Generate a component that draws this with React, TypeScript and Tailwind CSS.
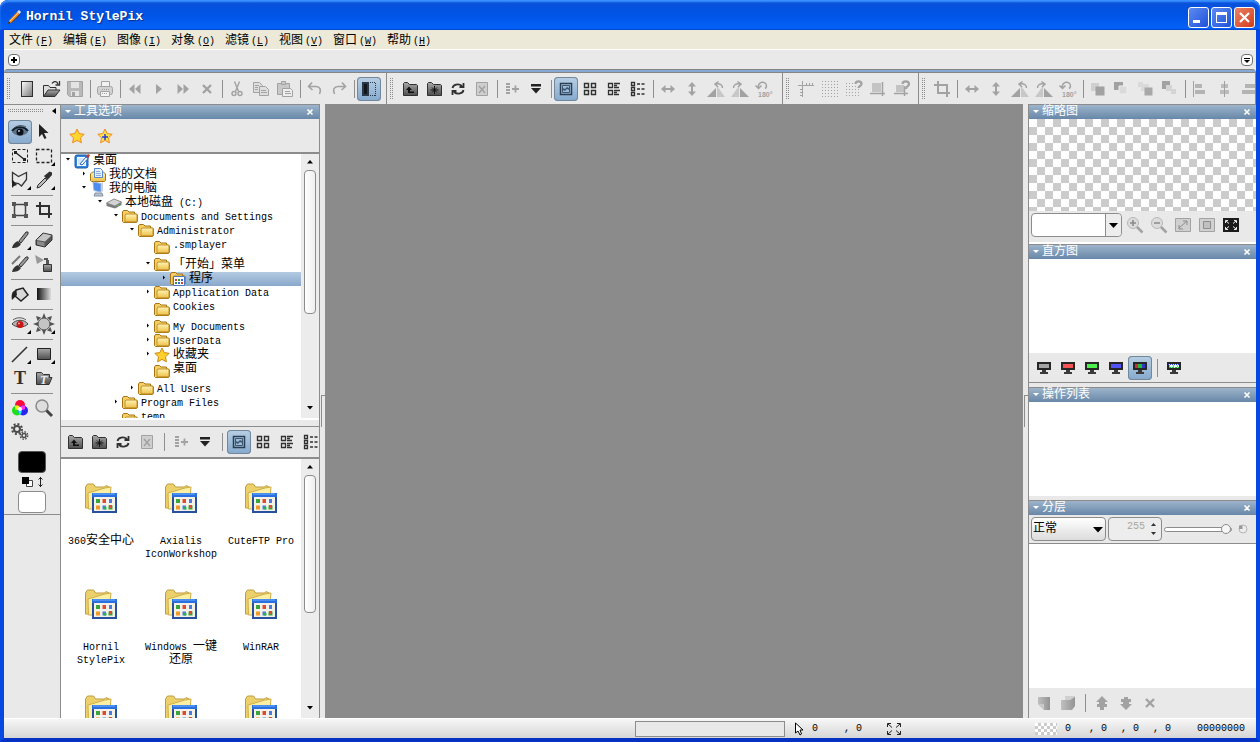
import React from "react";

const dark = "#303030";

const icons: Record<string, React.ReactNode> = {
  new: <rect x="6.5" y="4.5" width="11" height="15" fill="url(#page)" stroke={dark} />,
  open: (
    <>
      <path d="M4.5 19.5V8.5h5l1.5 2h6v3" fill="#ddd" stroke={dark} />
      <path d="M4.5 19.5 9 13h12l-5 6.5z" fill="url(#steel)" stroke={dark} />
      <path d="M13 6.5c2-3 5-2 6 .5M20.5 4v4h-4" fill="none" stroke={dark} strokeWidth="1.3" />
    </>
  ),
  save: (
    <>
      <path d="M4.5 4.5h15v15h-13l-2-2z" fill="#b9b9b9" stroke="currentColor" />
      <path d="M8 5h8v6H8zM8 14h8v5H8z" fill="#e4e4e4" />
      <path d="M9 15h3v4H9z" fill="currentColor" />
    </>
  ),
  print: (
    <>
      <path d="M8.5 10V4.5h8V10" fill="#f2f2f2" stroke="currentColor" />
      <rect x="4.5" y="9.5" width="15" height="8" rx="2" fill="#d2d2d2" stroke="currentColor" />
      <path d="M7.5 14.5h9v5h-9z" fill="#f2f2f2" stroke="currentColor" />
      <path d="M9 12.5h8M9 16.5h6" stroke="currentColor" strokeDasharray="1 1" />
    </>
  ),
  back: <path d="M11.5 7v10L6 12zM17.5 7v10L12 12z" fill="currentColor" />,
  play: <path d="M9 7v10l6-5z" fill="currentColor" />,
  forward: <path d="M6.5 7v10L12 12zM12.5 7v10L18 12z" fill="currentColor" />,
  close: <path d="m8 8 8 8M16 8l-8 8" stroke="currentColor" strokeWidth="2.4" />,
  cut: (
    <g fill="none" stroke="currentColor" strokeWidth="1.4">
      <path d="m9.5 4.5 4 10M14.5 4.5l-4 10" />
      <circle cx="9" cy="16.5" r="2" />
      <circle cx="15" cy="16.5" r="2" />
    </g>
  ),
  copy: (
    <g fill="#dedede" stroke="currentColor">
      <path d="M4.500 5.500h6l3 3v7h-9z" />
      <path d="M10.500 9.500h6l3 3v6h-9z" />
      <path d="M6 8.500h4M6 10.500h3M6 12.500h3M12 13.500h5M12 15.500h6" />
    </g>
  ),
  paste: (
    <g fill="#c8c8c8" stroke="currentColor">
      <path d="M4.5 6.5h12v11h-12z" />
      <path d="M8.5 4.5h4v3h-4z" />
      <path d="M9.5 11.5h8l2 2v6h-10z" fill="#eee" />
      <path d="M12 14.5h5M12 16.5h6" />
    </g>
  ),
  undo: <path d="M9 5.5 5.5 9.5l4 3.5M6 9.5h7c4 0 5.500 3 3.500 7.500" fill="none" stroke="currentColor" strokeWidth="1.6" />,
  redo: <path d="m15 5.5 3.5 4-4 3.5M18 9.5h-7c-4 0-5.500 3-3.500 7.500" fill="none" stroke="currentColor" strokeWidth="1.6" />,
  split: (
    <>
      <path d="M5 5h7v14H5z" fill="#26384a" />
      <path d="M7 7h3v10H7z" fill="#10161c" />
      <path d="M13 5.5h6M18.5 6v13M13 18.5h6" fill="none" stroke="#26384a" strokeDasharray="1 1" />
    </>
  ),
  folderUp: (
    <>
      <path d="M5.5 18.500v-12l1-1h3l2 2h7l1 1v10z" fill="url(#steel)" stroke={dark} />
      <path d="M11 9.500 8 13h2v3h6v-1.500h-4V13h2z" fill="#111" />
    </>
  ),
  folderNew: (
    <>
      <path d="M5.5 18.500v-12l1-1h3l2 2h7l1 1v10z" fill="url(#steel)" stroke={dark} />
      <path d="M12.500 9v8M8.500 13h8M10 10.500l5 5M15 10.500l-5 5" stroke="#111" />
    </>
  ),
  refresh: (
    <g fill="none" stroke={dark} strokeWidth="1.8">
      <path d="M6.500 11c.5-3.500 6-5 9.500-2M17.500 6v4h-4" />
      <path d="M17.500 13c-.5 3.500-6 5-9.500 2M6.500 18v-4h4" />
    </g>
  ),
  remove: (
    <>
      <path d="M6.500 5.500h11v13h-11z" fill="#cfcfcf" stroke="currentColor" />
      <path d="m9 9 6 7M15 9l-6 7" stroke="currentColor" strokeWidth="1.5" />
    </>
  ),
  addList: (
    <>
      <path d="M6 7h4M6 10h4M6 13h4M6 16h4" stroke="currentColor" strokeWidth="2" />
      <path d="M12 12h7M15.500 8.500v7" stroke="currentColor" strokeWidth="1.8" />
    </>
  ),
  drop: <path d="M7 7h10v2.500H7zM7 11h10l-5 5.500z" fill="#222" />,
  viewImage: (
    <>
      <path d="M6.500 6.500h11v11h-11z" fill="none" stroke="#2b3d50" strokeWidth="1.5" />
      <path d="M8.500 8.500h7v7h-7z" fill="#9fbbd6" stroke="#3c5875" />
      <path d="m9 11 2 1 2-2 2 1v2l-2-1-2 2-2-1z" fill="#3c5875" />
    </>
  ),
  viewGrid: <path d="M6.500 6.500h4v4h-4zM13.500 6.500h4v4h-4zM6.500 13.500h4v4h-4zM13.500 13.500h4v4h-4z" fill="none" stroke={dark} strokeWidth="1.4" />,
  viewTiles: (
    <path d="M6.500 6.500h4v4h-4zM6.500 13.500h4v4h-4zM12 6.500h6M12 8.500h3M12 10.500h5M12 13.500h6M12 15.500h3M12 17.500h5" fill="none" stroke={dark} strokeWidth="1.3" />
  ),
  viewList: (
    <path d="M5.500 5.500h3v3h-3zM5.500 10.500h3v3h-3zM5.500 15.500h3v3h-3zM11 7h3M15.500 7h3M11 12h3M15.500 12h3M11 17h3M15.500 17h3" fill="none" stroke={dark} strokeWidth="1.3" />
  ),
  flipH: <path d="m5 12 4.500-4v3h5V8l4.500 4-4.500 4v-3h-5v3z" fill="currentColor" />,
  flipV: <path d="m12 5 4 4.500h-3v5h3L12 19l-4-4.500h3v-5H8z" fill="currentColor" />,
  rotL: (
    <>
      <path d="m3 20 9-9v9z" fill="currentColor" />
      <path d="m13 9 8 11h-8z" fill="#c8c8c8" />
      <path d="M14.500 4.500 11 7l3 3M11.500 7c4-.5 7 0 7 4" fill="none" stroke="currentColor" strokeWidth="1.5" />
    </>
  ),
  rotR: (
    <>
      <path d="m21 20-9-9v9z" fill="currentColor" />
      <path d="m11 9-8 11h8z" fill="#c8c8c8" />
      <path d="M9.500 4.500 13 7l-3 3M12.500 7c-4-.5-7 0-7 4" fill="none" stroke="currentColor" strokeWidth="1.5" />
    </>
  ),
  rot180: (
    <>
      <path d="m3.500 8.500 3 3 3-3M6.500 11c-1.500-7 8-7.500 8-2 0 1-.5 2-1.500 2.500" fill="none" stroke="currentColor" strokeWidth="1.5" />
      <text x="6" y="20" fontSize="7" fontWeight="700" fontFamily="Liberation Sans" fill="currentColor">180°</text>
    </>
  ),
  ruler: <path d="M4 8.500h16M8.500 4v16M12.500 6v3M15.500 6v3M18.500 6v3M6 12.500h3M6 15.500h3M6 18.500h3" stroke="currentColor" fill="none" />,
  dots: <path d="M4 4.500h17M4 7.500h17M4 10.500h17M4 13.500h17M4 16.500h17M4 19.500h17" stroke="currentColor" strokeDasharray="1 2" />,
  dotsSnap: (
    <>
      <path d="M4 6.500h9M4 9.500h11M4 12.500h14M4 15.500h14M4 18.500h14" stroke="currentColor" strokeDasharray="1 2" />
      <path d="M13.500 7c0-3.500 6-3.500 6 0 0 2-3 2-3 4" fill="none" stroke="currentColor" strokeWidth="2.2" />
    </>
  ),
  guide: (
    <>
      <path d="M6 6h9v9H6z" fill="#c4c4c4" />
      <path d="M4 16.500h15M16.500 5v14" stroke="currentColor" strokeWidth="1.5" />
    </>
  ),
  guideSnap: (
    <>
      <path d="M6 8h8v7H6z" fill="#c4c4c4" />
      <path d="M4 16.500h14M14.500 9v10" stroke="currentColor" strokeWidth="1.5" />
      <path d="M12.500 7c0-3.500 6.500-3.500 6.500 0 0 2.500-3 2-3 5" fill="none" stroke="currentColor" strokeWidth="2.2" />
    </>
  ),
  crop: <path d="M4 8h13v12M8 4v12h12" fill="none" stroke="currentColor" strokeWidth="2" />,
  front: (
    <>
      <path d="M5 6h8v8H5z" fill="#cfcfcf" />
      <path d="M9.500 9.500h9v9h-9z" fill="currentColor" />
    </>
  ),
  backward: (
    <>
      <path d="M4 5h9v8H4z" fill="currentColor" />
      <path d="M9 9h8v8H9z" fill="#dadada" stroke="#eee" />
    </>
  ),
  raise: (
    <>
      <path d="M4 5h5v5H4zM7 7h8v7H7z" fill="#dadada" />
      <path d="M10.500 10.500h8v8h-8z" fill="#a8a8a8" />
    </>
  ),
  lower: (
    <>
      <path d="M4 4h8v5H8v3H4z" fill="currentColor" />
      <path d="M8 8h6v6H8zM13 12h5v5h-5z" fill="#d4d4d4" />
    </>
  ),
  alignL: (
    <>
      <path d="M5.500 4v16" stroke="currentColor" />
      <path d="M7 7h7v4H7zM7 13h10v4H7z" fill="#b4b4b4" />
    </>
  ),
  alignC: (
    <>
      <path d="M9 7h7v4H9zM8 13h9v4H8z" fill="#bcbcbc" />
      <path d="M12.500 4v16" stroke="currentColor" />
    </>
  ),
  alignR: <path d="M9 7h10v4H9zM6 13h13v4H6z" fill="#b4b4b4" />,
  eye: (
    <>
      <path d="M4 12c4-5 12-5 16 0-4 5-12 5-16 0z" fill="#5f7387" />
      <path d="M4 11c4-5 12-5 16 0" fill="none" stroke="#111d29" strokeWidth="1.8" />
      <path d="M6 8c4-3 8-3 12-1" fill="none" stroke="#3c4f61" />
      <circle cx="12" cy="12" r="3.5" fill="#0c1218" />
      <circle cx="11" cy="11" r="1" fill="#b9cbdc" />
    </>
  ),
  pointer: <path d="M7 4v13l3-3 2.500 5 2-1-2.500-5h4.500z" fill="#222" />,
  transformSel: (
    <g fill="none" stroke="#222">
      <path d="M4.500 5.500h15v13h-15z" strokeDasharray="3 2" />
      <path d="m7 8 10 8" strokeWidth="1.5" />
      <path d="M6 7h3v3H6zM15 14h3v3h-3z" fill="#222" stroke="none" />
    </g>
  ),
  rectSel: <path d="M4.500 5.500h15v13h-15z" fill="none" stroke="#222" strokeWidth="1.3" strokeDasharray="3 2" />,
  lasso: (
    <>
      <path d="M4.500 14.500v-10l6 4 8-4v7l-5 6.500-3-2.500-6-1z" fill="none" stroke="#333" strokeWidth="1.3" />
      <path d="M4 11v9l2-2 3-1z" fill="#222" />
    </>
  ),
  dropper: (
    <>
      <path d="m5 20 1-3 7-7 2 2-7 7z" fill="#bbb" stroke={dark} />
      <path d="m12 8 5.500-4.500 2.500 1v2.500L15.500 12z" fill={dark} />
    </>
  ),
  frame: (
    <>
      <path d="M6.500 6.500h11v11h-11z" fill="none" stroke="#444" strokeWidth="1.5" />
      <path d="M4 4h4v4H4zM16 4h4v4h-4zM4 16h4v4H4zM16 16h4v4h-4z" fill="#555" />
    </>
  ),
  brush: (
    <>
      <path d="m11 13 7-9h2v2l-7 9z" fill="#999" stroke={dark} />
      <path d="M4 20c1-4 3-6 6-7l3 3c-2 3-4 4-9 4z" fill="#333" />
    </>
  ),
  cloneBrush: (
    <>
      <path d="M4 12 12 4" stroke="#777" strokeWidth="2" />
      <path d="m11 13 7-8h2v2l-7 8z" fill="#999" stroke={dark} />
      <path d="M4 20c1-4 3-6 6-7l3 3c-2 3-5 4-9 4z" fill="#333" />
    </>
  ),
  eraser: (
    <>
      <path d="m4 12 7-7 9 2v5l-7 7-9-2z" fill="#555" stroke="#333" />
      <path d="m4.500 12 7-6.500 8 2-6.500 6z" fill="#c4c4c4" />
      <path d="m5 13 7.500 1.500v4L5 16.500z" fill="#8a8a8a" />
    </>
  ),
  spray: (
    <>
      <path d="m3 3 9 5-7 4z" fill="#999" />
      <path d="M11.500 12.500h8v7h-8z" fill="url(#steel)" stroke="#333" />
      <path d="M14 8h3v4h-3zM12 6h4v2h-4z" fill="#555" />
    </>
  ),
  bucket: (
    <>
      <path d="m8 8 7-2 5 7-7 6-6-5z" fill="#d8d8d8" stroke="#222" strokeWidth="1.5" />
      <path d="M4 18c-1-5 0-9 4-10l1 5z" fill="#222" />
    </>
  ),
  gradient: <path d="M5 6h14v12H5z" fill="url(#fade)" />,
  redEye: (
    <>
      <path d="M4 12c4-5 12-5 16 0-4 4-12 4-16 0z" fill="#b5b5b5" stroke="#444" />
      <path d="M5 8c4-3 9-3 13 0" fill="none" stroke="#555" />
      <circle cx="12" cy="12.5" r="3.5" fill="#c81414" />
      <circle cx="11" cy="11.5" r="1" fill="#f6a0a0" />
    </>
  ),
  sun: (
    <>
      <path d="m12 1 2 5h-4zM12 23l2-5h-4zM1 12l5-2v4zM23 12l-5-2v4zM4 4l5 1.500L5.500 9zM20 4l-5 1.500L18.500 9zM4 20l5-1.500L5.500 15zM20 20l-5-1.500 3.500-3.500z" fill="#555" />
      <circle cx="12" cy="12" r="6" fill="#c4c4c4" stroke="#4a4a4a" />
    </>
  ),
  line: <path d="M4 20 19 5" stroke="#333" strokeWidth="1.6" />,
  shape: <path d="M5.500 6.500h13v11h-13z" fill="url(#steel)" stroke="#222" />,
  text: (
    <text x="6" y="18" fontSize="18" fontWeight="700" fontFamily="Liberation Serif" fill={dark}>
      T
    </text>
  ),
  textFolder: (
    <>
      <path d="M4.500 18.500v-12h5l2 2h6v3h2.500l-3 7z" fill="url(#steel)" stroke={dark} />
      <text x="8" y="18" fontSize="12" fontWeight="700" fontStyle="italic" fontFamily="Liberation Serif" fill="#eee">
        T
      </text>
    </>
  ),
  colors: (
    <>
      <circle cx="12" cy="9" r="5" fill="#ff0a3c" />
      <circle cx="9" cy="14.5" r="5" fill="#1de019" />
      <circle cx="15" cy="14.5" r="5" fill="#2824f0" />
      <path d="M7 9.700c2-.7 4 0 5 1.500l-1 3-4-1z" fill="#ffee16" />
      <path d="M17 9.700c-2-.7-4 0-5 1.500l1 3 4-1z" fill="#ff30f0" />
      <path d="M12 19c-2-2-2-4-1-6h2c1 2 1 4-1 6z" fill="#20e8f0" />
      <circle cx="12" cy="13" r="2" fill="#fff" />
    </>
  ),
  magnifier: (
    <>
      <circle cx="10" cy="10" r="6" fill="#dedede" stroke="#8a8a8a" strokeWidth="1.5" />
      <path d="m14.500 14.500 5.500 5.500" stroke="#444" strokeWidth="3" />
    </>
  ),
  gears: (
    <g fill="none" stroke="#4b4b4b">
      <circle cx="9" cy="9" r="3" strokeWidth="2" />
      <circle cx="9" cy="9" r="5" strokeWidth="2" strokeDasharray="2 1.9" />
      <circle cx="16" cy="15.5" r="2" strokeWidth="1.5" />
      <circle cx="16" cy="15.5" r="3.7" strokeWidth="1.5" strokeDasharray="1.5 1.4" />
    </g>
  ),
  zoomIn: (
    <>
      <path d="m13.500 13.500 6 6" stroke="currentColor" strokeWidth="2.5" />
      <circle cx="10" cy="10" r="5.5" fill="#dcdcdc" stroke="#b8b8b8" />
      <path d="M7 10h6M10 7v6" stroke="#8a8a8a" strokeWidth="1.6" />
    </>
  ),
  zoomOut: (
    <>
      <path d="m13.500 13.500 6 6" stroke="currentColor" strokeWidth="2.5" />
      <circle cx="10" cy="10" r="5.5" fill="#dcdcdc" stroke="#b8b8b8" />
      <path d="M7 10h6" stroke="#8a8a8a" strokeWidth="1.6" />
    </>
  ),
  fit: (
    <>
      <path d="M4.500 5.500h15v13h-15z" fill="#d0d0d0" stroke="currentColor" />
      <path d="m8 15 8-7M12 8h4v4M12 16H8v-4" fill="none" stroke="#8d8d8d" />
    </>
  ),
  actual: (
    <>
      <path d="M4.500 5.500h15v13h-15z" fill="#d0d0d0" stroke="currentColor" />
      <path d="M8.500 8.500h7v7h-7z" fill="#c0c0c0" stroke="#8d8d8d" />
    </>
  ),
  full: (
    <>
      <path d="M4 5h16v14H4z" fill="#1c1c1c" />
      <path d="M6.500 10V7.500H9M7 8l3 2.500M17.500 10V7.500H15M17 8l-3 2.500M6.500 14v2.500H9M7 16l3-2.500M17.500 14v2.500H15M17 16l-3-2.500" fill="none" stroke="#eee" />
    </>
  ),
  layerNew: (
    <>
      <path d="M6 6h12v13h-6l-6-6z" fill="url(#faint)" />
      <path d="M6 13h6v6z" fill="#c9c9c9" />
    </>
  ),
  layerCopy: (
    <>
      <path d="M9 5h10v10H9z" fill="#d0d0d0" />
      <path d="M5 9h9l5-3v9l-3 4H5z" fill="url(#faint)" />
    </>
  ),
  up: <path d="m12 5 6 6h-3v2h2v3h-3v3h-4v-3H7v-3h2v-2H6z" fill="currentColor" />,
  down: <path d="m12 19 6-6h-3v-2h2V8h-3V6h-4v2H7v3h2v2H6z" fill="currentColor" />,
};

const screens: Record<string, React.ReactNode> = {
  gray: <path d="M7 8h10v4H7z" fill="#a5a5a5" />,
  red: <path d="M7 8h10v4H7z" fill="#f45454" />,
  green: <path d="M7 8h10v4H7z" fill="#4df04d" />,
  blue: <path d="M7 8h10v4H7z" fill="#5454f4" />,
  rgb: (
    <>
      <path d="M7 8h4v4H7z" fill="#c42c3c" />
      <path d="M10 8h4v4h-4z" fill="#25b93b" />
      <path d="M14 8h3v4h-3z" fill="#3036c8" />
    </>
  ),
  noise: (
    <>
      <path d="M7 8h10v4H7z" fill="#e5fff0" />
      <path d="M6 8.500h12" stroke="#2236ef" strokeDasharray="1 1" />
      <path d="M7 11.500h10" stroke="#1cc43a" strokeDasharray="2 1" />
      <path d="M7 10h10" stroke="#d02828" strokeDasharray="1 3" />
    </>
  ),
};

Object.entries(screens).forEach(([name, fill]) => {
  icons[`screen-${name}`] = (
    <>
      <path d="M5 6h14v8H5z" fill="#262626" />
      <path d="M10 14h4v2h2v2H8v-2h2z" fill="#3a3a3a" />
      {fill}
    </>
  );
});

const Defs: React.FC = () => (
  <svg className="block size-0" aria-hidden="true">
    <defs>
      <linearGradient id="page" x1="0" y1="0" x2="1" y2="1">
        <stop offset="0" stopColor="#fff" />
        <stop offset="1" stopColor="#777" />
      </linearGradient>
      <linearGradient id="steel" x1="0" y1="0" x2="0" y2="1">
        <stop offset="0" stopColor="#a8a8a8" />
        <stop offset="1" stopColor="#4e4e4e" />
      </linearGradient>
      <linearGradient id="fade">
        <stop offset="0" stopColor="#111" />
        <stop offset="1" stopColor="#ddd" />
      </linearGradient>
      <linearGradient id="faint">
        <stop offset="0" stopColor="#c0c0c0" />
        <stop offset="1" stopColor="#939393" />
      </linearGradient>
      <linearGradient id="gold" x1="0" y1="0" x2="0" y2="1">
        <stop offset="0" stopColor="#fff5b4" />
        <stop offset="1" stopColor="#eec04a" />
      </linearGradient>
    </defs>
  </svg>
);

// Latin runs sit on a 6px half-width grid next to 12px CJK glyphs.
const Txt: React.FC<{ children: string }> = ({ children }) => (
  <>
    {children.split(/([\x20-\x7e]+)/).map((run, i) =>
      i % 2 ? (
        <span key={i} className="text-[10px]">
          {run}
        </span>
      ) : (
        run
      )
    )}
  </>
);

type ToolProps = { icon: string; label: string; off?: boolean; active?: boolean; more?: boolean };

const Tool: React.FC<ToolProps> = ({ icon, label, off, active, more }) => (
  <button
    type="button"
    aria-label={label}
    aria-pressed={active}
    className={
      active
        ? "size-6 shrink-0 rounded-[4px] bg-linear-to-b from-[#b9cfe4] to-[#85a9cd] ring-1 ring-inset ring-[#71879c]"
        : "size-6 shrink-0"
    }
  >
    <svg viewBox="0 0 24 24" className={off ? "size-6 text-[#a2a2a2]" : "size-6 text-[#303030]"}>
      {icons[icon]}
      {more && <path d="M23 18v4h-4z" fill="#000" />}
    </svg>
  </button>
);

const Sep: React.FC<{ wide?: boolean }> = ({ wide }) => (
  <span className={wide ? "flex w-2.5 shrink-0 justify-center" : "flex w-1.5 shrink-0 justify-center"}>
    <span className="h-[18px] w-px bg-[#8f8f8f]" />
  </span>
);

const Grip: React.FC = () => (
  <span className="mr-1 ml-[3px] h-[22px] w-1 shrink-0 bg-[conic-gradient(at_1px_1px,transparent_75%,#8c8c8c_0)] bg-[length:2px_2px]" />
);

const BrowseTools: React.FC<{ wide?: boolean }> = ({ wide }) => (
  <>
    <Tool icon="folderUp" label="向上" />
    <Tool icon="folderNew" label="新建文件夹" />
    <Tool icon="refresh" label="刷新" />
    <Tool icon="remove" label="删除" off />
    <Sep wide={wide} />
    <Tool icon="addList" label="添加到列表" off />
    <Tool icon="drop" label="更多" />
    <Sep wide={wide} />
    <Tool icon="viewImage" label="缩略图" active />
    <Tool icon="viewGrid" label="图标" />
    <Tool icon="viewTiles" label="平铺" />
    <Tool icon="viewList" label="列表" />
  </>
);

const TransformTools: React.FC = () => (
  <>
    <Tool icon="flipH" label="水平翻转" off />
    <Tool icon="flipV" label="垂直翻转" off />
    <Tool icon="rotL" label="向左旋转" off />
    <Tool icon="rotR" label="向右旋转" off />
    <Tool icon="rot180" label="旋转180°" off />
  </>
);

const PanelHeader: React.FC<{ title: string }> = ({ title }) => (
  <div className="flex h-[15px] shrink-0 items-center border-t border-[#8c8c8c] bg-linear-to-b from-[#9db4cb] to-[#6887a8] pr-[5px] pl-1 text-white">
    <svg viewBox="0 0 6 4" className="h-1 w-1.5">
      <path d="M0 0h6L3 3z" fill="#fff" />
    </svg>
    <h2 className="ml-[3px] leading-[14px]">{title}</h2>
    <button type="button" aria-label={`关闭${title}`} className="ml-auto">
      <svg viewBox="0 0 8 8" className="size-2">
        <path d="m1.500 1.500 5 5M6.500 1.500l-5 5" stroke="#fff" strokeWidth="1.6" />
      </svg>
    </button>
  </div>
);

const TitleBar: React.FC = () => (
  <header className="flex h-[30px] shrink-0 items-center rounded-t-lg bg-linear-to-b from-[#0a4fd8] via-[#0054e6] to-[#0563fb] pt-1 pr-[5px] pl-1.5 text-white shadow-[inset_0_2px_2px_#3d93ff,inset_0_-1px_1px_#0046d0]">
    <Defs />
    <svg viewBox="0 0 16 16" className="size-4">
      <path d="M2 15 3.500 11 11 3l2.500 2L6 13z" fill="#f08a24" />
      <path d="m4 12 8-8" stroke="#ffd27a" />
      <path d="m6 13.500 8-8.500" stroke="#7a3a08" />
      <path d="m11 3 2-2 2 2-1.500 2z" fill="#e8e2da" />
      <path d="m2 15 .8-2.500L4.500 14z" fill="#222" />
    </svg>
    <h1 className="ml-1 text-[13px] font-bold text-shadow-[1px_1px_1px_#0a2f8a]">Hornil StylePix</h1>
    <div className="ml-auto flex gap-0.5">
      <button type="button" aria-label="最小化" className="size-[21px] rounded-[3px] border border-white bg-linear-to-br from-[#5d8af2] to-[#1f50d8]">
        <svg viewBox="0 0 19 19"><path d="M4 12h7v3H4z" fill="#fff" /></svg>
      </button>
      <button type="button" aria-label="最大化" className="size-[21px] rounded-[3px] border border-white bg-linear-to-br from-[#5d8af2] to-[#1f50d8]">
        <svg viewBox="0 0 19 19"><path d="M4 4h11v11H4zM5 7v7h9V7z" fill="#fff" fillRule="evenodd" /></svg>
      </button>
      <button type="button" aria-label="关闭" className="size-[21px] rounded-[3px] border border-white bg-linear-to-br from-[#ea8062] to-[#d23a14]">
        <svg viewBox="0 0 19 19"><path d="m5 5 9 9M14 5l-9 9" stroke="#fff" strokeWidth="2.2" /></svg>
      </button>
    </div>
  </header>
);

const menus = [
  ["文件", "F"],
  ["编辑", "E"],
  ["图像", "I"],
  ["对象", "O"],
  ["滤镜", "L"],
  ["视图", "V"],
  ["窗口", "W"],
  ["帮助", "H"],
];

const MenuBar: React.FC = () => (
  <nav className="flex h-5 shrink-0 items-center border-b border-white bg-[#ece9d8] pt-0.5">
    {menus.map(([name, key]) => (
      <button key={key} type="button" className="w-[54px] shrink-0 pl-[5px] text-left whitespace-nowrap">
        {name}
        <span className="ml-0.5 text-[10px]">
          (<u>{key}</u>)
        </span>
      </button>
    ))}
  </nav>
);

const TabStrip: React.FC = () => (
  <div className="shrink-0">
    <div className="flex h-[19px] items-center justify-between pr-[3px] pl-1">
      <button type="button" aria-label="新建标签" className="size-3 rounded-[4px] border border-[#707070] bg-white">
        <svg viewBox="0 0 10 10"><path d="M2 5h6M5 2v6" stroke="#000" strokeWidth="2" /></svg>
      </button>
      <button type="button" aria-label="标签列表" className="size-3 rounded-[4px] border border-[#707070] bg-white">
        <svg viewBox="0 0 10 10"><path d="M2 3.500h6" stroke="#000" /><path d="M2 5h6L5 8z" /></svg>
      </button>
    </div>
    <div className="h-1 rounded-t-sm border-y border-[#858585] bg-[#86a8d4]" />
  </div>
);

const ToolBar: React.FC = () => (
  <div className="flex h-[31px] shrink-0 overflow-hidden border-r border-[#8c8c8c]">
    <div className="flex shrink-0 items-center border-r border-[#8c8c8c] pr-[5px]">
      <Grip />
      <Tool icon="new" label="新建" />
      <Tool icon="open" label="打开" />
      <Tool icon="save" label="保存" off />
      <Sep />
      <Tool icon="print" label="打印" off />
      <Sep />
      <Tool icon="back" label="上一个" off />
      <Tool icon="play" label="播放" off />
      <Tool icon="forward" label="下一个" off />
      <Tool icon="close" label="关闭" off />
      <Sep />
      <Tool icon="cut" label="剪切" off />
      <Tool icon="copy" label="复制" off />
      <Tool icon="paste" label="粘贴" off />
      <Sep />
      <Tool icon="undo" label="撤销" off />
      <Tool icon="redo" label="重做" off />
      <Sep />
      <Tool icon="split" label="浏览面板" active />
    </div>
    <div className="flex shrink-0 items-center border-r border-[#8c8c8c] pr-1.5">
      <Grip />
      <BrowseTools />
      <Sep />
      <TransformTools />
    </div>
    <div className="flex shrink-0 items-center border-r border-[#8c8c8c] pr-1">
      <Grip />
      <Tool icon="ruler" label="标尺" off />
      <Tool icon="dots" label="网格" off />
      <Tool icon="dotsSnap" label="对齐网格" off />
      <Tool icon="guide" label="参考线" off />
      <Tool icon="guideSnap" label="对齐参考线" off />
    </div>
    <div className="flex min-w-0 flex-1 items-center overflow-hidden">
      <Grip />
      <Tool icon="crop" label="裁剪" off />
      <Sep />
      <TransformTools />
      <Sep />
      <Tool icon="front" label="置于顶层" off />
      <Tool icon="backward" label="置于底层" off />
      <Tool icon="raise" label="上移" off />
      <Tool icon="lower" label="下移" off />
      <Sep />
      <Tool icon="alignL" label="左对齐" off />
      <Tool icon="alignC" label="居中对齐" off />
      <Tool icon="alignR" label="右对齐" off />
    </div>
  </div>
);

const toolGroups: ToolProps[][] = [
  [
    { icon: "eye", label: "浏览", active: true },
    { icon: "pointer", label: "选择对象" },
    { icon: "transformSel", label: "变换选区" },
    { icon: "rectSel", label: "矩形选区", more: true },
    { icon: "lasso", label: "套索", more: true },
    { icon: "dropper", label: "魔棒", more: true },
  ],
  [
    { icon: "frame", label: "变形" },
    { icon: "crop", label: "裁剪" },
  ],
  [
    { icon: "brush", label: "画笔", more: true },
    { icon: "eraser", label: "橡皮擦" },
    { icon: "cloneBrush", label: "仿制" },
    { icon: "spray", label: "喷枪" },
  ],
  [
    { icon: "bucket", label: "填充" },
    { icon: "gradient", label: "渐变" },
  ],
  [
    { icon: "redEye", label: "去红眼", more: true },
    { icon: "sun", label: "曝光", more: true },
  ],
  [
    { icon: "line", label: "直线", more: true },
    { icon: "shape", label: "形状", more: true },
    { icon: "text", label: "文字" },
    { icon: "textFolder", label: "插入图片" },
  ],
  [
    { icon: "colors", label: "颜色" },
    { icon: "magnifier", label: "缩放" },
    { icon: "gears", label: "设置" },
  ],
];

const ToolBox: React.FC = () => (
  <aside className="w-14 shrink-0 border-t border-[#8c8c8c]">
    <div className="flex flex-col border-b border-[#8c8c8c] pb-px">
      <div className="flex h-[15px] items-start justify-between pt-[3px] pr-1 pl-1">
        <span className="mt-px h-1 w-9 bg-[conic-gradient(at_1px_1px,transparent_75%,#8c8c8c_0)] bg-[length:2px_2px]" />
        <svg viewBox="0 0 4 6" className="h-1.5 w-1">
          <path d="M4 0v6L0 3z" fill="#000" />
        </svg>
      </div>
      {toolGroups.map((group, i) => (
        <div key={i}>
          {i > 0 && (
            <div className="flex h-1.5 items-center px-[7px]">
              <span className="h-px flex-1 bg-[#8f8f8f]" />
            </div>
          )}
          <div className="flex flex-wrap px-1">
            {group.map((tool) => (
              <Tool key={tool.icon} {...tool} />
            ))}
          </div>
        </div>
      ))}
      <div className="mt-[7px] flex flex-col items-center gap-[3px]">
        <button type="button" aria-label="前景色" className="h-[22px] w-7 rounded-[4px] border border-[#555] bg-black" />
        <svg viewBox="0 0 24 12" className="h-3 w-6">
          <path d="M6.500 4.500h6v6h-6z" fill="#fff" stroke="#444" />
          <path d="M2 1h7v7H2z" fill="#000" />
          <path d="M20.500 1v10M18.500 3.500l2-2 2 2M18.500 8.500l2 2 2-2" fill="none" stroke="#222" />
        </svg>
        <button type="button" aria-label="背景色" className="h-[22px] w-7 rounded-[4px] border border-[#8c8c8c] bg-white" />
      </div>
    </div>
  </aside>
);

const folderPath = (
  <>
    <path d="M.5 12.500V3l1-1.500h4L7 3h5.500v2h2l1 1v6.500l-1 1h-13z" fill="#f3cf66" stroke="#a87410" />
    <path d="M3 12.500V6l1-1h10.500l.5 1v6l-1 .8H3z" fill="url(#gold)" stroke="#c0902a" />
  </>
);

const starPath = "m8 1 2.200 4.600 5 .7-3.700 3.500.9 5L8 12.400l-4.400 2.400.9-5L.8 6.300l5-.7z";

const treeIcons: Record<string, React.ReactNode> = {
  folder: folderPath,
  programs: (
    <>
      {folderPath}
      <path d="M3.500 5.500h11v9h-11z" fill="#fff" stroke="#4d77b8" />
      <path d="M5 8h2v2H5zM11 11h2v2h-2z" fill="#d63b2a" />
      <path d="M8 8h2v2H8zM5 11h2v2H5z" fill="#2f9a3a" />
      <path d="M11 8h2v2h-2zM8 11h2v2H8z" fill="#3668d8" />
    </>
  ),
  star: <path d={starPath} fill="#ffcf2e" stroke="#c48a12" />,
  desktop: (
    <>
      <rect x="1" y="2" width="13" height="13" rx="2" fill="#2f85dd" stroke="#1c5aa8" />
      <rect x="3.500" y="4.500" width="8" height="8" fill="#cfe6fb" stroke="#fff" />
      <path d="m6 11 6-7 2 1.500-6 6.500z" fill="#fff" stroke="#2864b4" />
      <path d="m12 3 2-2 2 1-1.500 3z" fill="#c0392b" />
    </>
  ),
  docs: (
    <>
      <path d="M.5 13.500V7l2-2h11l2 2v6.500l-1 1h-13z" fill="url(#gold)" stroke="#a87410" />
      <path d="M4.500 10.500V1.500h6l2 2v7z" fill="#e6f1fd" stroke="#5b87c6" />
      <path d="M6 4.500h4M6 6.500h5M6 8.500h5" stroke="#86abdc" />
    </>
  ),
  computer: (
    <>
      <path d="m3 1 8 1.500V11L4 9.500z" fill="#4b8cf0" stroke="#9db4d6" />
      <path d="m11 2.500 2-1.500v9L11 11z" fill="#c8cfdb" />
      <path d="m5 12 7 0 1 3H4z" fill="#b9c2cf" stroke="#8793a6" />
    </>
  ),
  disk: (
    <>
      <path d="M.5 8 8 4l7.500 3-6.500 4z" fill="#d4d4d4" stroke="#8c8c8c" />
      <path d="M.5 8v3L9 13.500V11zM15.500 7v3L9 13.500V11z" fill="#7d7d7d" />
      <path d="M11.500 10.500h1.500" stroke="#4be04b" />
    </>
  ),
};

type Node = { level: number; text: string; icon?: string; state?: "open" | "shut"; selected?: boolean };

const nodes: Node[] = [
  { level: 1, text: "桌面", icon: "desktop", state: "open" },
  { level: 2, text: "我的文档", icon: "docs", state: "shut" },
  { level: 2, text: "我的电脑", icon: "computer", state: "open" },
  { level: 3, text: "本地磁盘 (C:)", icon: "disk", state: "open" },
  { level: 4, text: "Documents and Settings", state: "open" },
  { level: 5, text: "Administrator", state: "open" },
  { level: 6, text: ".smplayer" },
  { level: 6, text: "「开始」菜单", state: "open" },
  { level: 7, text: "程序", icon: "programs", state: "shut", selected: true },
  { level: 6, text: "Application Data", state: "shut" },
  { level: 6, text: "Cookies" },
  { level: 6, text: "My Documents", state: "shut" },
  { level: 6, text: "UserData", state: "shut" },
  { level: 6, text: "收藏夹", icon: "star", state: "shut" },
  { level: 6, text: "桌面" },
  { level: 5, text: "All Users", state: "shut" },
  { level: 4, text: "Program Files", state: "shut" },
  { level: 4, text: "temp" },
];

const TreeRow: React.FC<{ node: Node }> = ({ node }) => (
  <li
    role="treeitem"
    aria-level={node.level}
    aria-selected={!!node.selected}
    className={[
      "flex whitespace-pre",
      node.state ? "h-3.5" : "h-5",
      node.selected ? "bg-linear-to-b from-[#b4cae1] to-[#88a8cb]" : "",
    ].join(" ")}
    style={{ paddingLeft: node.level * 16 - 11 }}
  >
    <svg viewBox="0 0 8 14" className="h-3.5 w-2 shrink-0">
      {node.state === "open" && <path d="M0 4h4L2 6.500z" fill="#000" />}
      {node.state === "shut" && <path d="M1 3.500v4L3 5.500z" fill="#000" />}
    </svg>
    <svg viewBox="0 0 16 16" className={node.state ? "-mt-px size-4 shrink-0" : "mt-0.5 size-4 shrink-0"}>
      {treeIcons[node.icon ?? "folder"]}
    </svg>
    <span className="ml-[3px] leading-[14px]">
      <Txt>{node.text}</Txt>
    </span>
  </li>
);

const ScrollBar: React.FC<{ tall?: boolean }> = ({ tall }) => (
  <div className="flex w-[18px] shrink-0 flex-col items-center bg-[#ececec]">
    <button type="button" aria-label="向上滚动" className="flex h-4 w-full shrink-0 items-center justify-center">
      <svg viewBox="0 0 6 4" className="h-1 w-1.5"><path d="M0 3.500h6L3 0z" /></svg>
    </button>
    <div className="min-h-0 w-3 flex-1">
      <div className={tall ? "h-[63%] rounded-[4px] border border-[#8c8c8c] bg-linear-to-r from-white to-[#eee]" : "h-[62%] rounded-[4px] border border-[#8c8c8c] bg-linear-to-r from-white to-[#eee]"} />
    </div>
    <button type="button" aria-label="向下滚动" className="flex h-5 w-full shrink-0 items-center justify-center">
      <svg viewBox="0 0 6 4" className="h-1 w-1.5"><path d="M0 0h6L3 3.500z" /></svg>
    </button>
  </div>
);

const FolderApps: React.FC = () => (
  <svg viewBox="0 0 34 34" className="size-[34px]">
    <path d="M1.500 27V6l2-3h6l2 3h9l1.500-1.500 4 2V27z" fill="#ecd06c" stroke="#c09c3e" />
    <path d="M4.500 28 4 12l17-5 6-1-2 22z" fill="#fdf0a4" stroke="#d0ae4a" />
    <path d="M9 13h23v18H9z" fill="#f4f2e8" stroke="#27509e" strokeWidth="2" />
    <path d="M8 12h25v4H8z" fill="#2a6fe0" />
    <path d="M9 13h22" stroke="#6db0ff" />
    <path d="M12 18h4v4h-4zM24.500 24.500h4v4h-4z" fill="#3aa53a" />
    <path d="M18.500 18h3.500v4h-3.500zM25 24h3v3h-3z" fill="#dd4a35" />
    <path d="M25 18h3v4h-3zM18.500 24.500h3.500v4h-3.500z" fill="#4a7be0" />
    <path d="M12 24.500h4v4h-4z" fill="#f09a28" />
    <path d="M20 26h2.500v2.500H20z" fill="#2fb050" />
  </svg>
);

// The last row only peeks in, its captions stay out of view.
const folders = [
  "360安全中心",
  "Axialis IconWorkshop",
  "CuteFTP Pro",
  "Hornil StylePix",
  "Windows 一键还原",
  "WinRAR",
  "",
  "",
  "",
];

const Browser: React.FC = () => (
  <section className="flex w-[260px] shrink-0 flex-col border-x border-[#8c8c8c]">
    <PanelHeader title="工具选项" />
    <div className="flex h-[35px] shrink-0 items-center gap-3 border-b-2 border-[#8c8c8c] pl-2">
      <button type="button" aria-label="收藏夹">
        <svg viewBox="0 0 16 16" className="size-4">
          <path d={starPath} fill="#ffd62e" stroke="#ee8a22" />
        </svg>
      </button>
      <button type="button" aria-label="添加到收藏夹">
        <svg viewBox="0 0 16 16" className="size-4">
          <path d={starPath} fill="#ffe24a" stroke="#ee8a22" />
          <path d="M8 6v6M5 9h6" stroke="#1f3fd8" strokeWidth="1.5" />
        </svg>
      </button>
    </div>
    <div className="flex h-[264px] shrink-0 bg-white">
      <ul role="tree" className="min-w-0 flex-1 overflow-hidden">
        {nodes.map((node, i) => (
          <TreeRow key={i} node={node} />
        ))}
      </ul>
      <ScrollBar tall />
    </div>
    <div className="h-[9px] shrink-0 border-t-2 border-b border-t-white border-b-[#8c8c8c]" />
    <div className="flex h-8 shrink-0 items-center overflow-hidden border-b-2 border-[#8c8c8c] pl-0.5">
      <BrowseTools wide />
    </div>
    <div className="flex min-h-0 flex-1 bg-white">
      <ul className="grid min-w-0 flex-1 auto-rows-[106px] grid-cols-3 overflow-hidden">
        {folders.map((name, i) => (
          <li key={i} className="flex flex-col items-center pt-[22px]">
            <FolderApps />
            {name && (
              <span className="mt-5 max-w-[76px] text-center leading-[13px]">
                <Txt>{name}</Txt>
              </span>
            )}
          </li>
        ))}
      </ul>
      <ScrollBar />
    </div>
  </section>
);

const Splitter: React.FC = () => (
  <div className="flex w-[5px] shrink-0 items-center">
    <span className="ml-px h-8 w-1 border-t border-l border-[#8c8c8c]" />
  </div>
);

const RightPanels: React.FC = () => (
  <aside className="flex w-[228px] shrink-0 flex-col border-l border-[#8c8c8c]">
    <PanelHeader title="缩略图" />
    <div className="h-[92px] shrink-0 bg-[repeating-conic-gradient(#cbcbcb_0_25%,#fff_0_50%)] bg-[length:16px_16px]" />
    <div className="flex h-[33px] shrink-0 items-center border-b-2 border-white pb-[3px] pl-0.5">
      <div className="relative mr-px flex h-6 w-[91px] shrink-0">
        <select aria-label="缩放比例" className="w-full appearance-none rounded-[4px] border border-[#8c8c8c] bg-white">
          <option> </option>
        </select>
        <svg viewBox="0 0 16 22" className="pointer-events-none absolute top-px right-px h-[22px] w-4">
          <path d="M0 0h12q4 0 4 4v14q0 4-4 4H0z" fill="#ededed" />
          <path d="M.5 0v22" stroke="#8c8c8c" />
          <path d="M4 9h9l-4.500 5z" />
        </svg>
      </div>
      <Tool icon="zoomIn" label="放大" off />
      <Tool icon="zoomOut" label="缩小" off />
      <Tool icon="fit" label="适合窗口" off />
      <Tool icon="actual" label="实际大小" off />
      <Tool icon="full" label="全屏" />
    </div>

    <PanelHeader title="直方图" />
    <div className="h-[94px] shrink-0 bg-white" />
    <div className="mb-1 flex h-[30px] shrink-0 items-center border-b border-[#8c8c8c] pl-[3px]">
      <Tool icon="screen-gray" label="亮度" />
      <Tool icon="screen-red" label="红色" />
      <Tool icon="screen-green" label="绿色" />
      <Tool icon="screen-blue" label="蓝色" />
      <Tool icon="screen-rgb" label="RGB" active />
      <Sep wide />
      <Tool icon="screen-noise" label="全部通道" />
    </div>

    <PanelHeader title="操作列表" />
    <div className="mb-1 h-[94px] shrink-0 bg-white" />

    <PanelHeader title="分层" />
    <div className="flex h-[29px] shrink-0 items-center border-b border-[#8c8c8c] pl-0.5">
      <div className="relative mr-0.5 flex h-6 w-[75px] shrink-0">
        <select aria-label="混合模式" className="w-full appearance-none rounded-[4px] border border-[#8c8c8c] bg-linear-to-b from-white to-[#dcdcdc] pl-px">
          <option>正常</option>
        </select>
        <svg viewBox="0 0 10 6" className="pointer-events-none absolute top-2.5 right-[3px] h-1.5 w-2.5">
          <path d="M0 0h10L5 5.500z" />
        </svg>
      </div>
      <div className="flex h-6 w-[54px] shrink-0 items-center rounded-[4px] border border-[#8c8c8c] bg-[#ededed]">
        <input aria-label="不透明度" disabled defaultValue="255" className="mb-1 w-9 text-right text-[10px] text-[#a9a79a]" />
        <div className="ml-1.5 flex flex-col gap-1.5">
          <button type="button" aria-label="增加">
            <svg viewBox="0 0 5 3" className="block h-[3px] w-[5px]"><path d="M0 3h5L2.500 0z" fill="#333" /></svg>
          </button>
          <button type="button" aria-label="减少">
            <svg viewBox="0 0 5 3" className="block h-[3px] w-[5px]"><path d="M0 0h5L2.500 3z" fill="#333" /></svg>
          </button>
        </div>
      </div>
      <input
        type="range"
        aria-label="不透明度滑块"
        defaultValue={100}
        className="ml-0.5 h-[5px] w-[68px] appearance-none rounded-full border border-[#8c8c8c] bg-white [&::-webkit-slider-thumb]:size-2.5 [&::-webkit-slider-thumb]:appearance-none [&::-webkit-slider-thumb]:rounded-full [&::-webkit-slider-thumb]:border [&::-webkit-slider-thumb]:border-[#8c8c8c] [&::-webkit-slider-thumb]:bg-[#f6f6f6]"
      />
      <button type="button" aria-label="重置" className="ml-1.5">
        <svg viewBox="0 0 10 10" className="block size-2.5">
          <circle cx="5" cy="5" r="4" fill="#ececec" stroke="#b5b5b5" />
          <path d="M1 5V1.500h3.500V5z" fill="#999" />
        </svg>
      </button>
    </div>
    <div className="min-h-0 flex-1 bg-white" />
    <div className="flex h-[30px] shrink-0 items-center pl-[3px]">
      <Tool icon="layerNew" label="新建图层" off />
      <Tool icon="layerCopy" label="复制图层" off />
      <Sep wide />
      <Tool icon="up" label="上移图层" off />
      <Tool icon="down" label="下移图层" off />
      <Tool icon="close" label="删除图层" off />
    </div>
  </aside>
);

const StatusBar: React.FC = () => (
  <footer className="flex h-5 shrink-0 items-center justify-end border-t border-white bg-linear-to-b from-[#f7f7f7] to-[#d6d6d6] pt-px pr-[11px] text-[10px]">
    <div className="h-4 w-[150px] border border-[#8c8c8c] bg-[#e8e8e8]" />
    <svg viewBox="0 0 10 14" className="ml-[9px] h-3.5 w-2.5">
      <path d="M1.500 1v10L4 9l2 4 1.500-1L6 8h3z" fill="#fff" stroke="#000" />
    </svg>
    <span className="ml-2 w-8">0</span>
    <span className="w-3">,</span>
    <span className="w-[30px]">0</span>
    <svg viewBox="0 0 16 14" className="h-3.5 w-4">
      <path d="M1.500 5V1.500H5M2 2l4 3.500M14.500 5V1.500H11M14 2l-4 3.500M1.500 9v3.500H5M2 12l4-3.500M14.500 9v3.500H11M14 12l-4-3.500" fill="none" stroke="#222" />
    </svg>
    <span className="ml-[133px] h-3 w-[22px] bg-[repeating-conic-gradient(#cbcbcb_0_25%,#fff_0_50%)] bg-[length:6px_6px]" />
    <span className="ml-2 w-6">0</span>
    <span className="w-3">,</span>
    <span className="w-5">0</span>
    <span className="w-3">,</span>
    <span className="w-5">0</span>
    <span className="w-3">,</span>
    <span className="w-8">0</span>
    <span>00000000</span>
  </footer>
);

const App: React.FC = () => {
  return (
    <div className="flex h-screen flex-col overflow-hidden rounded-t-lg bg-[#0a4bea] font-['Liberation_Mono','Noto_Sans_CJK_SC',monospace] text-xs text-black">
      <TitleBar />
      <div className="flex min-h-0 flex-1 flex-col border-x-4 border-b-4 border-x-[#0848e2] border-b-[#0532c4] bg-[#e9e9e9]">
        <MenuBar />
        <TabStrip />
        <ToolBar />
        <div className="flex min-h-0 flex-1">
          <ToolBox />
          <Browser />
          <Splitter />
          <main className="min-w-0 flex-1 bg-[#8b8b8b]" />
          <Splitter />
          <RightPanels />
        </div>
        <StatusBar />
      </div>
    </div>
  );
};

export default App;
